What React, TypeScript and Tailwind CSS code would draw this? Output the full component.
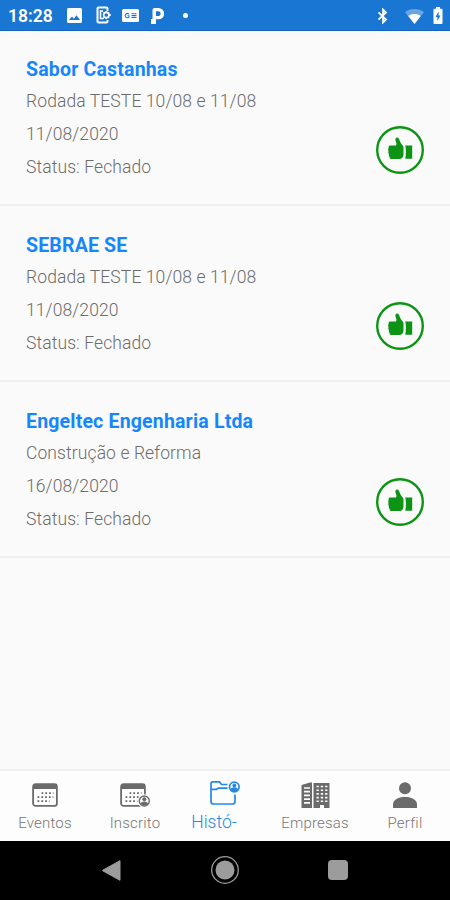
import type { ReactNode } from "react";

type Meeting = {
  company: string;
  description: string;
  date: string;
  status: string;
};

const meetings: Meeting[] = [
  {
    company: "Sabor Castanhas",
    description: "Rodada TESTE 10/08 e 11/08",
    date: "11/08/2020",
    status: "Fechado",
  },
  {
    company: "SEBRAE SE",
    description: "Rodada TESTE 10/08 e 11/08",
    date: "11/08/2020",
    status: "Fechado",
  },
  {
    company: "Engeltec Engenharia Ltda",
    description: "Construção e Reforma",
    date: "16/08/2020",
    status: "Fechado",
  },
];

function StatusBar() {
  return (
    <header className="flex h-[30.5px] shrink-0 items-center border-b border-[#1565c0] bg-[#1976d2] pl-2 pr-[7px] text-white">
      <span className="w-[59px] pt-[3px] text-[17.5px] leading-none font-semibold">
        18:28
      </span>
      <svg className="mt-0.5 h-[15px] w-[15px]" viewBox="0 0 15 15" fill="currentColor">
        <path
          fillRule="evenodd"
          d="M1.5 0h12A1.5 1.5 0 0 1 15 1.5v12a1.5 1.5 0 0 1-1.5 1.5h-12A1.5 1.5 0 0 1 0 13.5v-12A1.5 1.5 0 0 1 1.5 0ZM2 12h11L9.5 7.3 6.9 10.7 5 8.5Z"
        />
      </svg>
      <svg className="mt-px ml-[14px] h-[18px] w-[15px]" viewBox="0 0 15 18" fill="none" stroke="currentColor">
        <path strokeWidth="2" d="M11.5 5V2.5Q11.5 1.5 10.5 1.5h-8Q1.5 1.5 1.5 2.5v13q0 1 1 1h8q1 0 1-1V14" />
        <path strokeWidth="1.6" d="M7 5H4.500v7.500H8" />
        <circle cx="10.3" cy="9" r="2.7" strokeWidth="1.7" />
        <path strokeWidth="1.5" d="M10.3 5v1.5M10.3 11.5V13M13 9h2M7.500 6.300l1 1M13 6.300l-1 1M7.500 11.800l1-1M13 11.800l-1-1" />
      </svg>
      <svg className="mt-0.5 ml-[11px] h-[13px] w-[17px]" viewBox="0 0 17 13">
        <rect width="17" height="13" rx="1.5" fill="currentColor" />
        <g fill="none" stroke="#1976d2" strokeWidth="1.1">
          <path d="M7 5.100A2.200 2.200 0 1 0 7 8.100V6.700H5.500" />
          <path d="M9.500 4.700H14.500M9.500 6.600H14.500M9.500 8.500H14.500" />
        </g>
      </svg>
      <svg className="mt-0.5 ml-[12px] h-4 w-[13px]" viewBox="0 0 13 16" fill="currentColor">
        <path
          fillRule="evenodd"
          d="M3.5 0H7.5a5.200 5.200 0 0 1 0 11.300H5V16H0v-5h1.500V2Q1.500 0 3.500 0ZM5 3.300V8h2.300a2.300 2.300 0 0 0 0-4.700Z"
        />
      </svg>
      <span className="mt-0.5 ml-[19px] h-[5px] w-[5px] rounded-full bg-white" />
      <svg className="mt-0.5 ml-auto h-4 w-3" viewBox="0 0 12 16" fill="none" stroke="currentColor" strokeWidth="1.8">
        <path d="M1.500 4.300 9 11.500 6 14.500v-13L9 4.500 1.500 11.700" />
      </svg>
      <svg className="mt-[3px] ml-[16px] h-[15px] w-[19px]" viewBox="0 0 19 15" fill="currentColor">
        <path d="M9.500 15 0 3.200C5-1 14-1 19 3.200Z" opacity=".35" />
        <path d="M9.500 15 3.300 6.900c3.600-2.600 8.800-2.600 12.400 0Z" />
      </svg>
      <svg className="mt-0.5 ml-[9px] h-[17px] w-[10px]" viewBox="0 0 10 17">
        <path
          d="M3 0h4v1.800h1.500Q9.500 1.800 9.500 3v13q0 1-1 1h-7q-1 0-1-1V3q0-1.200 1-1.200H3Z"
          fill="currentColor"
        />
        <path d="M5.600 4.500 2.500 10h1.900v4L7.500 8.500H5.600Z" fill="#1976d2" />
      </svg>
    </header>
  );
}

function ThumbBadge() {
  return (
    <svg className="h-12 w-12 shrink-0" viewBox="0 0 48 48" fill="#0e9414">
      <circle cx="24" cy="24" r="22.8" fill="none" stroke="#0e9414" strokeWidth="2.4" />
      <path d="M14 19.500h6c.6-1 .6-2-.1-3.700-.7-1.900-.8-3.800.8-4.200 1.400-.3 2.300.8 2.800 2.300.5 1.700 1.500 3.300 2.400 4.500.8 1 1.600 1.600 1.600 3v7.200c0 2.800-1.700 4.500-4.500 4.500h-7.200c-1.500 0-2.300-1-2.200-2.400-.9-.6-1.100-1.800-.6-2.800-.9-.8-1-2.100-.4-3-.8-1-.5-2.400.2-3-.6-1.100 0-2.400 1.200-2.400Z" />
      <path d="M29.300 19.500h6.900v13.200h-6.900c.8-4.200.8-9 0-13.200Z" />
    </svg>
  );
}

function MeetingRow({ company, description, date, status }: Meeting) {
  return (
    <li className="flex h-[175.7px] items-center justify-between border-b-2 border-[#efefef] px-[26px]">
      <div className="pt-1 text-[17.5px] leading-[33px] font-[350] tracking-[0.1px] text-[#6c6c6c]">
        <h2 className="text-[19.5px] leading-[31px] font-bold tracking-[0.18px] text-[#1687fb]">{company}</h2>
        <p>{description}</p>
        <p>{date}</p>
        <p>Status: {status}</p>
      </div>
      <div className="pt-[66px]">
        <ThumbBadge />
      </div>
    </li>
  );
}

function CalendarShape() {
  return (
    <>
      <rect x="1.1" y="1.1" width="23.8" height="21.8" rx="2.5" fill="none" stroke="currentColor" strokeWidth="1.8" />
      <path d="M1 6V3.500Q1 1 3.500 1h19Q25 1 25 3.500V6Z" fill="currentColor" />
      <path
        d="M9.500 10.200h12M5.500 14.200h16M5.500 18.200h12"
        stroke="currentColor"
        strokeWidth="1.8"
        strokeDasharray="1.8 2"
      />
    </>
  );
}

function CalendarIcon() {
  return (
    <svg className="h-6 w-[26px]" viewBox="0 0 26 24">
      <CalendarShape />
    </svg>
  );
}

function CalendarUserIcon() {
  return (
    <svg className="h-6 w-[30px]" viewBox="0 0 30 24">
      <CalendarShape />
      <circle cx="24.3" cy="18" r="6.8" fill="#fdfdfd" />
      <circle cx="24.3" cy="18" r="5" fill="none" stroke="currentColor" strokeWidth="1.4" />
      <circle cx="24.3" cy="16.3" r="2" fill="currentColor" />
      <path d="M20.500 20.800c1-3 6.600-3 7.600 0-1.800 2.400-5.800 2.400-7.600 0Z" fill="currentColor" />
    </svg>
  );
}

function FolderUserIcon() {
  return (
    <svg className="h-6 w-[30px]" viewBox="0 0 30 24" fill="none" stroke="currentColor" strokeWidth="1.7">
      <path d="M17.500 3.500h-6L9.500.9H3Q1 .9 1 3v17.500q0 2.500 2.500 2.500h19q2.500 0 2.500-2.500V13.500" />
      <path d="M1 8.300h5.500l2-1.200h9" />
      <circle cx="24.3" cy="6" r="4.8" />
      <circle cx="24.3" cy="4.5" r="1.9" fill="currentColor" stroke="none" />
      <path d="M20.400 8.500c1-2.900 6.800-2.900 7.800 0-1.800 3-6 3-7.800 0Z" fill="currentColor" stroke="none" />
    </svg>
  );
}

function BuildingsIcon() {
  return (
    <svg className="h-[26px] w-[29px]" viewBox="0 0 29 26">
      <path d="M.5 3 9 .5h2V26H.5ZM12.500 1H28.500V26H23v-3h-4v3h-6.500Z" fill="currentColor" />
      <path
        d="M3 6h6M3 9.700h6M3 13.400h6M3 17.100h6M3 20.800h6"
        stroke="#fdfdfd"
        strokeWidth="1.7"
      />
      <path
        d="M15.500 4.500H27M15.500 8.200H27M15.500 11.900H27M15.500 15.600H27M15.500 19.300H27"
        stroke="#fdfdfd"
        strokeWidth="1.6"
        strokeDasharray="2.300 2"
      />
    </svg>
  );
}

function PersonIcon() {
  return (
    <svg className="h-[26px] w-6" viewBox="0 0 24 26" fill="currentColor">
      <circle cx="12" cy="6.3" r="6" />
      <path d="M0 26v-3.500C0 17.500 5.500 15 12 15s12 2.500 12 7.500V26Z" />
    </svg>
  );
}

type TabProps = {
  label: string;
  active?: boolean;
  children: ReactNode;
};

function Tab({ label, active, children }: TabProps) {
  return (
    <button
      type="button"
      className={
        active
          ? "flex flex-1 flex-col items-center pt-[9px] text-[#2389e4]"
          : "flex flex-1 flex-col items-center pt-[11px] text-[#6b6b6b]"
      }
    >
      <span className="flex h-[27px] items-center">{children}</span>
      <span
        className={
          active
            ? "mr-[22px] pt-px text-[17.5px] leading-[29px] font-[350]"
            : "text-[15px] leading-[28px] font-[350] tracking-[0.2px] text-[#777]"
        }
      >
        {label}
      </span>
    </button>
  );
}

function NavigationBar() {
  return (
    <div className="h-[59.5px] shrink-0 bg-black text-[#9c9c9c]">
      <div className="mx-auto flex h-full w-[246px] items-center justify-between">
        <svg className="h-[21px] w-[19px]" viewBox="0 0 19 21" fill="currentColor">
          <path d="M18 .7v19.600L.7 10.800v-.6Z" stroke="currentColor" strokeLinejoin="round" />
        </svg>
        <svg className="h-7 w-7" viewBox="0 0 28 28">
          <circle cx="14" cy="14" r="13.3" fill="none" stroke="currentColor" strokeWidth="1.3" />
          <circle cx="14" cy="14" r="9.5" fill="currentColor" />
        </svg>
        <span className="h-5 w-5 rounded-sm bg-[#9c9c9c]" />
      </div>
    </div>
  );
}

function App() {
  return (
    <div className="flex h-[900px] w-[450px] flex-col overflow-hidden bg-[#fafafa] font-['Roboto',sans-serif]">
      <StatusBar />
      <ul className="flex-1">
        {meetings.map((meeting) => (
          <MeetingRow key={meeting.company} {...meeting} />
        ))}
      </ul>
      <nav className="flex h-[72px] shrink-0 items-start border-t-2 border-[#f0f0f0] bg-[#fdfdfd]">
        <Tab label="Eventos">
          <CalendarIcon />
        </Tab>
        <Tab label="Inscrito">
          <CalendarUserIcon />
        </Tab>
        <Tab label="Histó-" active>
          <FolderUserIcon />
        </Tab>
        <Tab label="Empresas">
          <BuildingsIcon />
        </Tab>
        <Tab label="Perfil">
          <PersonIcon />
        </Tab>
      </nav>
      <NavigationBar />
    </div>
  );
}

export default App;
